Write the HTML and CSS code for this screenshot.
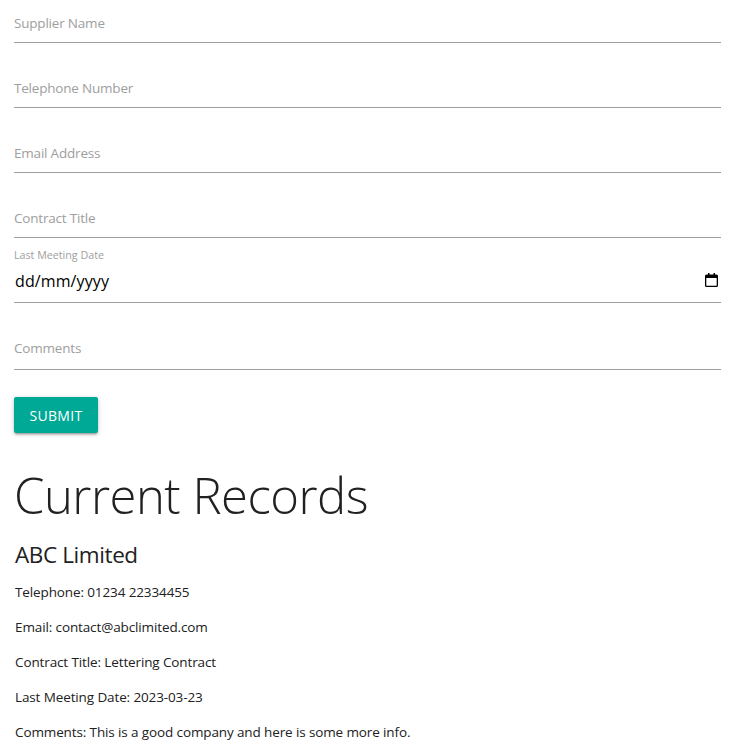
FILE: index.html
```html
<!DOCTYPE html>
<html lang="en">
<head>
<meta charset="utf-8">
<title>Records</title>
<link rel="stylesheet" href="styles.css">
</head>
<body>
<main class="page">
  <form class="form">
    <div class="field"><input class="input" type="text" placeholder="Supplier Name"></div>
    <div class="field"><input class="input" type="text" placeholder="Telephone Number"></div>
    <div class="field"><input class="input" type="text" placeholder="Email Address"></div>
    <div class="field"><input class="input" type="text" placeholder="Contract Title"></div>
    <div class="field field-date">
      <label class="date-label">Last Meeting Date</label>
      <div class="date-row">
        <span class="date-value">dd/mm/yyyy</span>
        <svg class="date-icon" width="13" height="14" viewBox="0 0 13 14" aria-hidden="true"><path d="M3 0h1.500v1.500h4V0H10v1.500h1.500A1.500 1.500 0 0 1 13 3v9.500a1.500 1.500 0 0 1-1.500 1.500h-10A1.500 1.500 0 0 1 0 12.500V3a1.500 1.500 0 0 1 1.500-1.500H3zM1.300 5v7.700h10.400V5z" fill="#000"/></svg>
      </div>
    </div>
    <div class="field field-comments"><input class="input input-comments" type="text" placeholder="Comments"></div>
    <button class="submit" type="button">SUBMIT</button>
  </form>
  <h1 class="title">Current Records</h1>
  <section class="record">
    <h2 class="record-name">ABC Limited</h2>
    <p class="record-line">Telephone: 01234 22334455</p>
    <p class="record-line">Email: contact@abclimited.com</p>
    <p class="record-line">Contract Title: Lettering Contract</p>
    <p class="record-line">Last Meeting Date: 2023-03-23</p>
    <p class="record-line">Comments: This is a good company and here is some more info.</p>
  </section>
</main>
</body>
</html>
```

FILE: styles.css
```css
* { box-sizing: border-box; }
html, body { margin: 0; background: #fff; }
body {
  font-family: "Open Sans", "Noto Sans", sans-serif;
  color: #212121;
  overflow: hidden;
}
.page { width: 735px; height: 747px; padding: 0 14px; }
.form { display: flex; flex-direction: column; }
.field { height: 43px; margin-bottom: 22px; }
.input {
  display: block;
  width: 100%;
  height: 43px;
  padding: 4px 0 0;
  border: 0;
  border-bottom: 1px solid #9e9e9e;
  outline: 0;
  background: transparent;
  font: inherit;
  font-size: 13.500px;
  letter-spacing: -0.2px;
}
.input-comments { padding-top: 0; }
.input::placeholder { color: #9e9e9e; opacity: 1; }
.field-date {
  height: 65px;
  margin-top: -22px;
  margin-bottom: 0;
  padding-top: 10px;
  border-bottom: 1px solid #9e9e9e;
  display: flex;
  flex-direction: column;
}
.date-label { font-size: 10.700px; line-height: 14px; color: #9e9e9e; }
.date-row { display: flex; align-items: center; justify-content: space-between; margin-top: 7px; height: 24px; padding: 0 3px 0 1px; }
.date-value { font-size: 16px; color: #000; letter-spacing: 0.1px; }
.date-icon { margin-top: -3px; }
.field-comments { margin-top: 24px; margin-bottom: 27px; }
.submit {
  align-self: flex-start;
  width: 84px;
  height: 36px;
  padding: 0;
  border: 0;
  border-radius: 2px;
  background: #00a896;
  color: #fff;
  font: inherit;
  font-size: 14px;
  letter-spacing: 0.3px;
  box-shadow: 0 2px 2px 0 rgba(0,0,0,.14), 0 3px 1px -2px rgba(0,0,0,.12), 0 1px 5px 0 rgba(0,0,0,.2);
}
.title {
  margin: 27px 0 0;
  font-size: 49px;
  line-height: 70px;
  font-weight: 300;
  letter-spacing: -0.5px;
}
.record-name {
  margin: 9px 0 0;
  padding-left: 1px;
  font-size: 22.500px;
  line-height: 32px;
  font-weight: 400;
  letter-spacing: -0.4px;
}
.record-line {
  margin: 11px 0 0;
  padding-left: 1px;
  font-size: 13.500px;
  line-height: 24px;
  letter-spacing: -0.12px;
}
.record-name + .record-line { margin-top: 9px; }
```
